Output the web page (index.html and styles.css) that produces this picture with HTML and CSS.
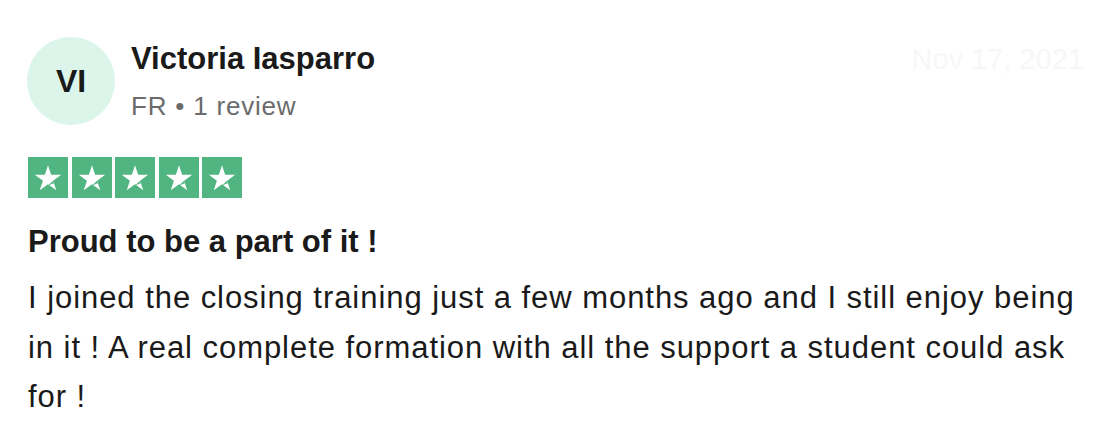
FILE: index.html
```html
<!DOCTYPE html>
<html lang="en">
<head>
<meta charset="utf-8">
<link rel="stylesheet" href="styles.css">
</head>
<body>
<article class="review">
  <header class="head">
    <div class="consumer">
      <div class="avatar">VI</div>
      <div class="info">
        <div class="name">Victoria Iasparro</div>
        <div class="meta">FR • 1 review</div>
      </div>
    </div>
    <time class="date">Nov 17, 2021</time>
  </header>
  <div class="stars">
    <span class="star"><svg viewBox="0 0 24 24"><path d="M12 3.5l2.1 6.4h6.7l-5.4 3.9 2.1 6.4-5.5-4-5.5 4 2.1-6.4-5.4-3.9h6.7z" fill="#fff"/><path d="M15.4 13.8l.5 1.7-3.9 1.5z" fill="#51b582"/></svg></span>
    <span class="star"><svg viewBox="0 0 24 24"><path d="M12 3.5l2.1 6.4h6.7l-5.4 3.9 2.1 6.4-5.5-4-5.5 4 2.1-6.4-5.4-3.9h6.7z" fill="#fff"/><path d="M15.4 13.8l.5 1.7-3.9 1.5z" fill="#51b582"/></svg></span>
    <span class="star"><svg viewBox="0 0 24 24"><path d="M12 3.5l2.1 6.4h6.7l-5.4 3.9 2.1 6.4-5.5-4-5.5 4 2.1-6.4-5.4-3.9h6.7z" fill="#fff"/><path d="M15.4 13.8l.5 1.7-3.9 1.5z" fill="#51b582"/></svg></span>
    <span class="star"><svg viewBox="0 0 24 24"><path d="M12 3.5l2.1 6.4h6.7l-5.4 3.9 2.1 6.4-5.5-4-5.5 4 2.1-6.4-5.4-3.9h6.7z" fill="#fff"/><path d="M15.4 13.8l.5 1.7-3.9 1.5z" fill="#51b582"/></svg></span>
    <span class="star"><svg viewBox="0 0 24 24"><path d="M12 3.5l2.1 6.4h6.7l-5.4 3.9 2.1 6.4-5.5-4-5.5 4 2.1-6.4-5.4-3.9h6.7z" fill="#fff"/><path d="M15.4 13.8l.5 1.7-3.9 1.5z" fill="#51b582"/></svg></span>
  </div>
  <h2 class="title">Proud to be a part of it !</h2>
  <p class="text">I joined the closing training just a few months ago and I still enjoy being in it ! A real complete formation with all the support a student could ask for !</p>
</article>
</body>
</html>
```
FILE: styles.css
```css
html, body {
  margin: 0;
  padding: 0;
  background: #fff;
}
body {
  font-family: "Liberation Sans", Arial, sans-serif;
  color: #1a1a1a;
}
.review {
  padding: 37px 30px 0 28px;
}
.head {
  display: flex;
  justify-content: space-between;
  align-items: flex-start;
}
.consumer {
  display: flex;
  align-items: flex-start;
  gap: 16px;
}
.avatar {
  width: 88px;
  height: 88px;
  border-radius: 50%;
  background: #dcf5eb;
  display: flex;
  align-items: center;
  justify-content: center;
  font-weight: 700;
  font-size: 32px;
  color: #1a1a1a;
  margin-left: -1px;
}
.info {
  display: flex;
  flex-direction: column;
  gap: 14px;
  margin-top: 3.5px;
}
.name {
  font-size: 31px;
  font-weight: 700;
  line-height: 36px;
}
.meta {
  font-size: 26px;
  line-height: 30px;
  letter-spacing: 0.8px;
  color: #6b6b6b;
}
.date {
  font-size: 29px;
  line-height: 36px;
  color: #f7f7f7;
  margin-top: 4px;
}
.stars {
  display: flex;
  gap: 3.5px;
  margin-top: 32px;
}
.star {
  width: 40px;
  height: 41px;
  background: #51b582;
  display: flex;
  align-items: center;
  justify-content: center;
}
.star svg {
  width: 36px;
  height: 36px;
}
.title {
  margin: 26px 0 0;
  font-size: 31px;
  font-weight: 700;
  line-height: 36px;
}
.text {
  margin: 13px 0 0;
  font-size: 31px;
  line-height: 49.5px;
  letter-spacing: 0.95px;
}
```
